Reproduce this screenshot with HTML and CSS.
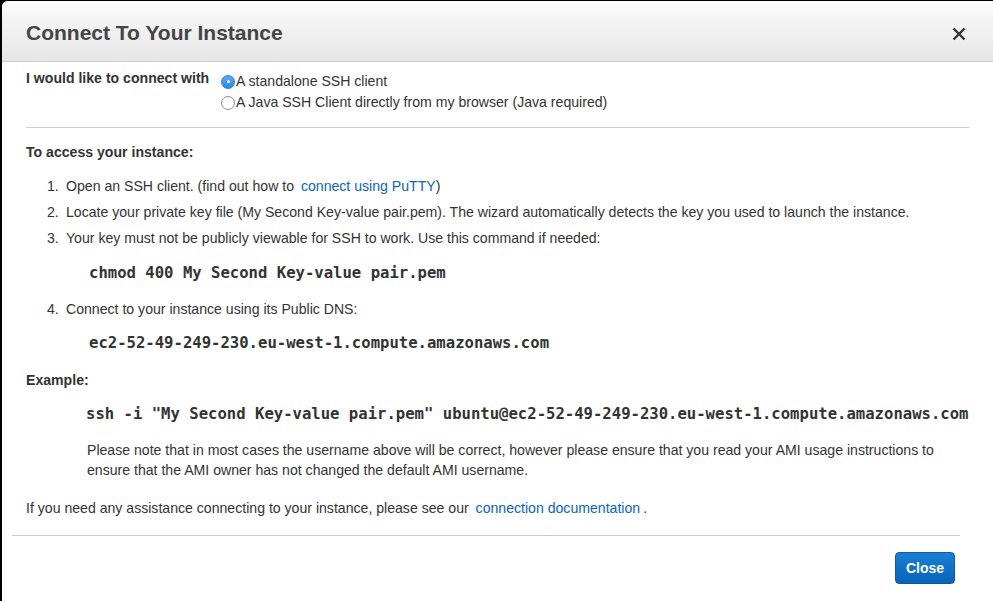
FILE: index.html
```html
<!DOCTYPE html>
<html>
<head>
<meta charset="utf-8">
<link rel="stylesheet" href="styles.css">
</head>
<body>
<div class="dialog">
  <div class="header">
    <h1 class="title">Connect To Your Instance</h1>
    <svg class="close-x" width="14" height="14" viewBox="0 0 14 14"><path d="M1.5 1.5 L12.5 12.5 M12.5 1.5 L1.5 12.5" stroke="#333" stroke-width="2.4" fill="none"/></svg>
  </div>
  <div class="body">
    <div class="connect-row">
      <div class="connect-label">I would like to connect with</div>
      <div class="options">
        <div class="option"><span class="radio checked"></span>A standalone SSH client</div>
        <div class="option"><span class="radio"></span>A Java SSH Client directly from my browser (Java required)</div>
      </div>
    </div>
    <div class="rule"></div>
    <div class="heading">To access your instance:</div>
    <ol class="steps">
      <li><span class="num">1.</span><div class="step-text">Open an SSH client. (find out how to <a class="link">connect using PuTTY</a>)</div></li>
      <li><span class="num">2.</span><div class="step-text">Locate your private key file (My Second Key-value pair.pem). The wizard automatically detects the key you used to launch the instance.</div></li>
      <li><span class="num">3.</span><div class="step-text">Your key must not be publicly viewable for SSH to work. Use this command if needed:<div class="code code-step">chmod 400 My Second Key-value pair.pem</div></div></li>
      <li><span class="num">4.</span><div class="step-text">Connect to your instance using its Public DNS:<div class="code code-dns">ec2-52-49-249-230.eu-west-1.compute.amazonaws.com</div></div></li>
    </ol>
    <div class="heading example">Example:</div>
    <div class="example-block">
      <div class="code code-ssh">ssh -i "My Second Key-value pair.pem" ubuntu@ec2-52-49-249-230.eu-west-1.compute.amazonaws.com</div>
      <p class="note">Please note that in most cases the username above will be correct, however please ensure that you read your AMI usage instructions to ensure that the AMI owner has not changed the default AMI username.</p>
    </div>
    <p class="assist">If you need any assistance connecting to your instance, please see our <a class="link link-doc">connection documentation</a>.</p>
  </div>
  <div class="footer-rule"></div>
  <div class="footer">
    <button class="btn-close">Close</button>
  </div>
</div>
</body>
</html>
```
FILE: styles.css
```css
html, body {
  margin: 0;
  padding: 0;
  background: #000;
  overflow: hidden;
  height: 601px;
}
body {
  font-family: "Liberation Sans", Arial, Helvetica, sans-serif;
  font-size: 14.1px;
  color: #333;
}
.dialog {
  margin: 1px 0 0 2px;
  width: 1000px;
  height: 620px;
  background: #fff;
  border-top-left-radius: 6px;
  overflow: hidden;
}
.header {
  height: 60px;
  border-bottom: 1px solid #cfcfcf;
  background: linear-gradient(#fbfbfb, #e6e6e6);
  display: flex;
  align-items: center;
  justify-content: space-between;
  padding: 0 36px 0 24px;
}
.title {
  margin: 0;
  font-size: 21px;
  font-weight: bold;
  color: #444;
  line-height: 24px;
  padding-top: 3px;
}
.close-x {
  margin-top: 6px;
}
.body {
  padding: 6px 0 0 24px;
  width: 943px;
}
.connect-row {
  display: flex;
  line-height: 20px;
}
.connect-label {
  font-weight: bold;
  width: 195px;
}
.options {
  margin-top: 3px;
  line-height: 21px;
}
.option {
  display: flex;
  align-items: center;
}
.radio {
  width: 12px;
  height: 12px;
  border: 1px solid #8c8c8c;
  border-radius: 50%;
  background: #fff;
  margin-right: 1px;
  box-sizing: content-box;
  position: relative;
  flex: none;
}
.radio.checked {
  border-color: #2a7fe0;
  background: linear-gradient(#5aa8f5, #2c86ea);
}
.radio.checked::after {
  content: "";
  position: absolute;
  left: 4.5px;
  top: 4.5px;
  width: 3px;
  height: 3px;
  border-radius: 50%;
  background: #fff;
}
.rule {
  height: 1px;
  background: #cccccc;
  margin-top: 14px;
}
.heading {
  font-weight: bold;
  line-height: 20px;
  margin-top: 14px;
}
.steps {
  list-style: none;
  margin: 14px 0 0 0;
  padding: 0 0 0 21px;
}
.steps li {
  display: flex;
  line-height: 20px;
  margin-bottom: 6px;
}
.num {
  width: 19px;
  flex: none;
}
.code {
  font-family: "DejaVu Sans Mono", Menlo, monospace;
  font-weight: bold;
  font-size: 15.6px;
  line-height: 20px;
  color: #333;
  white-space: nowrap;
}
.code-step {
  margin: 15px 0 10px 23px;
}
.code-dns {
  margin: 14px 0 0 23px;
}
.heading.example {
  margin-top: 17px;
}
.example-block {
  padding-left: 61px;
  margin-top: 14px;
}
.code-ssh {
  margin-left: -1px;
}
.note {
  margin: 16px 0 0 0;
  line-height: 20px;
  width: 880px;
}
.assist {
  margin: 18px 0 0 0;
  line-height: 20px;
}
.link {
  color: #0b65c2;
  text-decoration: none;
  margin-left: 3px;
}
.link-doc {
  margin-right: 3px;
}
.footer-rule {
  height: 1px;
  background: #cccccc;
  margin: 17px 0 0 10px;
  width: 948px;
}
.footer {
  width: 953px;
  display: flex;
  justify-content: flex-end;
  padding-top: 16px;
}
.btn-close {
  width: 60px;
  height: 32px;
  border: 1px solid #12599e;
  border-radius: 4px;
  background: linear-gradient(#1a7fd4, #0565b9);
  color: #fff;
  font-family: "Liberation Sans", Arial, sans-serif;
  font-weight: bold;
  font-size: 14px;
  padding: 0;
}
```
